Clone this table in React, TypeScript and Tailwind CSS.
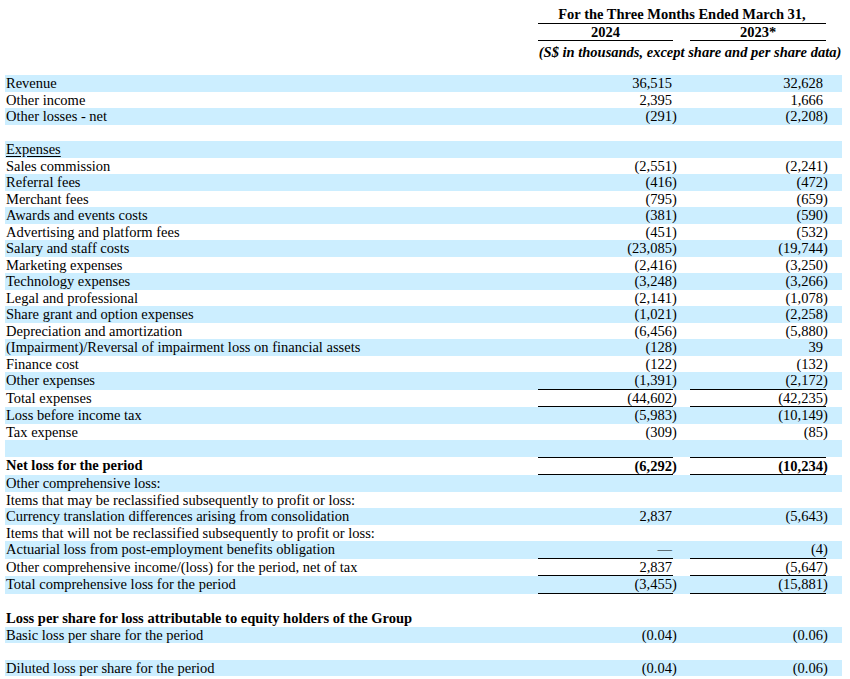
import React from 'react';

type Row = {
    label?: string;
    a?: string;
    b?: string;
    shade?: boolean;
    bold?: boolean;
    underline?: boolean;
    borderBottom?: boolean;
    borderTop?: boolean;
};

const rows: Row[] = [
    { label: 'Revenue', a: '36,515', b: '32,628', shade: true },
    { label: 'Other income', a: '2,395', b: '1,666' },
    { label: 'Other losses - net', a: '(291)', b: '(2,208)', shade: true },
    {},
    { label: 'Expenses', underline: true, shade: true },
    { label: 'Sales commission', a: '(2,551)', b: '(2,241)' },
    { label: 'Referral fees', a: '(416)', b: '(472)', shade: true },
    { label: 'Merchant fees', a: '(795)', b: '(659)' },
    { label: 'Awards and events costs', a: '(381)', b: '(590)', shade: true },
    { label: 'Advertising and platform fees', a: '(451)', b: '(532)' },
    { label: 'Salary and staff costs', a: '(23,085)', b: '(19,744)', shade: true },
    { label: 'Marketing expenses', a: '(2,416)', b: '(3,250)' },
    { label: 'Technology expenses', a: '(3,248)', b: '(3,266)', shade: true },
    { label: 'Legal and professional', a: '(2,141)', b: '(1,078)' },
    { label: 'Share grant and option expenses', a: '(1,021)', b: '(2,258)', shade: true },
    { label: 'Depreciation and amortization', a: '(6,456)', b: '(5,880)' },
    { label: '(Impairment)/Reversal of impairment loss on financial assets', a: '(128)', b: '39', shade: true },
    { label: 'Finance cost', a: '(122)', b: '(132)' },
    { label: 'Other expenses', a: '(1,391)', b: '(2,172)', shade: true, borderBottom: true },
    { label: 'Total expenses', a: '(44,602)', b: '(42,235)', borderBottom: true },
    { label: 'Loss before income tax', a: '(5,983)', b: '(10,149)', shade: true },
    { label: 'Tax expense', a: '(309)', b: '(85)' },
    { shade: true },
    { label: 'Net loss for the period', a: '(6,292)', b: '(10,234)', bold: true, borderTop: true, borderBottom: true },
    { label: 'Other comprehensive loss:', shade: true },
    { label: 'Items that may be reclassified subsequently to profit or loss:' },
    { label: 'Currency translation differences arising from consolidation', a: '2,837', b: '(5,643)', shade: true },
    { label: 'Items that will not be reclassified subsequently to profit or loss:' },
    { label: 'Actuarial loss from post-employment benefits obligation', a: '—', b: '(4)', shade: true, borderBottom: true },
    { label: 'Other comprehensive income/(loss) for the period, net of tax', a: '2,837', b: '(5,647)', borderBottom: true },
    { label: 'Total comprehensive loss for the period', a: '(3,455)', b: '(15,881)', shade: true, borderBottom: true },
    {},
    { label: 'Loss per share for loss attributable to equity holders of the Group', bold: true },
    { label: 'Basic loss per share for the period', a: '(0.04)', b: '(0.06)', shade: true },
    {},
    { label: 'Diluted loss per share for the period', a: '(0.04)', b: '(0.06)', shade: true },
];

const cols = 'grid grid-cols-[533px_135px_17px_136px_16px]';

// closing paren hangs past the cell's right edge, like the filing does
function Amount({ value }: { value?: string }) {
    if (!value) return null;
    if (!value.endsWith(')')) return <>{value}</>;
    return (
        <>
            {value.slice(0, -1)}
            <span className="inline-block w-0 text-left">)</span>
        </>
    );
}

function TableRow({ row }: { row: Row }) {
    const weight = row.bold ? 'font-bold' : '';
    const lines = `${row.borderTop ? 'border-t' : ''} ${row.borderBottom ? 'border-b' : ''} border-black`;

    return (
        <div className={`${cols} ${row.shade ? 'bg-[#cceeff]' : ''} ${weight} min-h-[16.5px]`}>
            <div className="pl-[1px] whitespace-nowrap">
                {row.underline ? <span className="underline underline-offset-[2px]">{row.label}</span> : row.label}
            </div>
            <div className={`text-right pr-[1px] whitespace-nowrap ${row.a ? lines : ''}`}>
                <Amount value={row.a} />
            </div>
            <div />
            <div className={`text-right pr-[3px] whitespace-nowrap ${row.b ? lines : ''}`}>
                <Amount value={row.b} />
            </div>
            <div />
        </div>
    );
}

export default function App() {
    return (
        <div className="w-[850px] h-[679px] bg-white text-black font-['Liberation_Serif','Times_New_Roman',serif] text-[14.5px] leading-[16.5px] pl-[5px] pt-[6px] overflow-hidden">
            <div className="w-[837px]">
                <div className={cols}>
                    <div />
                    <div className="col-span-3 text-center font-bold border-b border-black whitespace-nowrap">
                        For the Three Months Ended March 31,
                    </div>
                    <div />
                </div>
                <div className={cols}>
                    <div />
                    <div className="text-center font-bold border-b border-black">2024</div>
                    <div />
                    <div className="text-center font-bold border-b border-black">2023*</div>
                    <div />
                </div>
                <div className={`${cols} mt-[3px]`}>
                    <div />
                    <div className="col-span-4 text-center font-bold italic whitespace-nowrap">
                        (S$ in thousands, except share and per share data)
                    </div>
                </div>
                <div className="h-[14.5px]" />

                {rows.map((row, i) => (
                    <TableRow key={i} row={row} />
                ))}
            </div>
        </div>
    );
}
